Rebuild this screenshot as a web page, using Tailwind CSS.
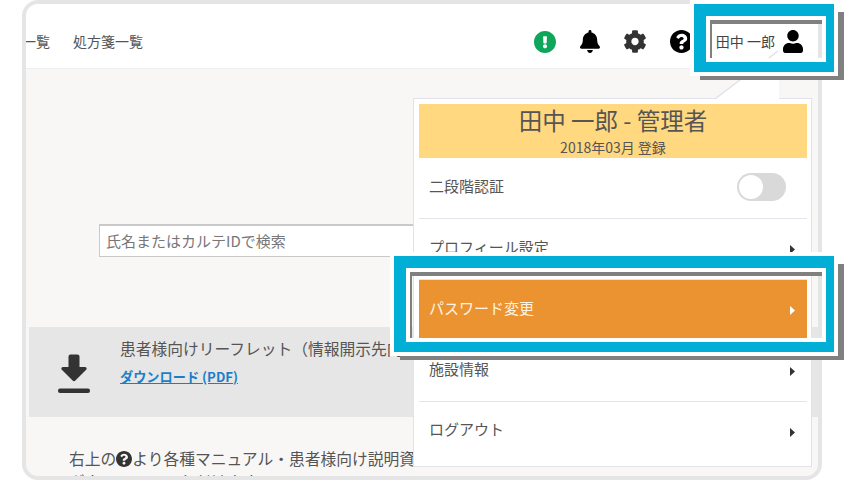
<!DOCTYPE html>
<html lang="ja">
<head>
<meta charset="utf-8">
<script src="https://cdn.jsdelivr.net/npm/@tailwindcss/browser@4"></script>
</head>
<body class="bg-white font-['Noto_Sans_CJK_JP','Noto_Sans',sans-serif] text-[#555]">
<div class="relative w-[844px] h-[480px] overflow-hidden bg-white">

  <!-- device frame -->
  <div class="absolute left-[22px] top-0 w-[800px] h-[480px] border-4 border-[#e5e5e5] rounded-[16px] overflow-hidden bg-[#f8f7f6]">
    <header class="h-[65px] pt-[11px] bg-white border-b border-[#efefef] flex items-center justify-between">
      <nav class="flex items-center gap-[23px] text-[14px] ml-[-4px]">
        <span>一覧</span>
        <span>処方箋一覧</span>
      </nav>
      <div class="flex items-center mr-[15px]">
        <div class="flex items-center gap-[24px] text-black">
          <svg class="w-[22px] h-[22px] ml-[1px]" viewBox="8 8 496 496"><path fill="#0ea65b" d="M504 256c0 136.997-111.043 248-248 248S8 392.997 8 256C8 119.083 119.043 8 256 8s248 111.083 248 248zm-248 50c-25.405 0-46 20.595-46 46s20.595 46 46 46 46-20.595 46-46-20.595-46-46-46zm-43.673-165.346l7.418 136c.347 6.364 5.609 11.346 11.982 11.346h48.546c6.373 0 11.635-4.982 11.982-11.346l7.418-136c.375-6.874-5.098-12.654-11.982-12.654h-63.383c-6.884 0-12.356 5.78-11.981 12.654z"/></svg>
          <svg class="w-[20px] h-[23px]" viewBox="0 0 448 512"><path fill="#000" d="M224 512c35.32 0 63.97-28.65 63.97-63.97H160.03C160.03 483.35 188.68 512 224 512zm215.39-149.71c-19.32-20.76-55.47-51.99-55.47-154.29 0-77.7-54.48-139.9-127.94-155.16V32c0-17.67-14.32-32-31.98-32s-31.98 14.33-31.98 32v20.84C118.56 68.1 64.08 130.3 64.08 208c0 102.3-36.15 133.53-55.47 154.29-6 6.45-8.66 14.16-8.61 21.71.11 16.4 12.98 32 32.1 32h383.8c19.12 0 32-15.6 32.1-32 .05-7.55-2.61-15.27-8.61-21.71z"/></svg>
          <svg class="w-[22px] h-[23px]" viewBox="16 8 480 496"><path fill="#333" d="M487.4 315.7l-42.6-24.6c4.3-23.2 4.3-47 0-70.2l42.6-24.6c4.9-2.8 7.1-8.6 5.5-14-11.1-35.6-30-67.8-54.7-94.6-3.8-4.1-10-5.1-14.8-2.3L380.8 110c-17.9-15.4-38.5-27.3-60.8-35.1V25.8c0-5.6-3.9-10.5-9.4-11.7-36.7-8.2-74.3-7.8-109.2 0-5.5 1.2-9.4 6.1-9.4 11.7V75c-22.2 7.9-42.8 19.8-60.8 35.1L88.7 85.5c-4.9-2.8-11-1.9-14.8 2.3-24.7 26.7-43.6 58.9-54.7 94.6-1.7 5.4.6 11.2 5.5 14L67.3 221c-4.3 23.2-4.3 47 0 70.2l-42.6 24.6c-4.9 2.8-7.1 8.6-5.5 14 11.1 35.6 30 67.8 54.7 94.6 3.8 4.1 10 5.1 14.8 2.3l42.6-24.6c17.9 15.4 38.5 27.3 60.8 35.1v49.2c0 5.6 3.9 10.5 9.4 11.7 36.7 8.2 74.3 7.8 109.2 0 5.5-1.2 9.4-6.1 9.4-11.7v-49.2c22.2-7.9 42.8-19.8 60.8-35.1l42.6 24.6c4.9 2.8 11 1.9 14.8-2.3 24.7-26.7 43.6-58.9 54.7-94.6 1.5-5.5-.7-11.3-5.6-14.1zM256 336c-44.1 0-80-35.9-80-80s35.9-80 80-80 80 35.9 80 80-35.9 80-80 80z"/></svg>
          <svg class="w-[23px] h-[23px]" viewBox="8 8 496 496"><path fill="#000" d="M504 256c0 136.997-111.043 248-248 248S8 392.997 8 256C8 119.083 119.043 8 256 8s248 111.083 248 248zM262.655 90c-54.497 0-89.255 22.957-116.549 63.758-3.536 5.286-2.353 12.415 2.715 16.258l34.699 26.31c5.205 3.947 12.621 3.008 16.665-2.122 17.864-22.658 30.113-35.797 57.303-35.797 20.429 0 45.698 13.148 45.698 32.958 0 14.976-12.363 22.667-32.534 33.976C247.128 238.528 216 254.941 216 296v4c0 6.627 5.373 12 12 12h56c6.627 0 12-5.373 12-12v-1.333c0-28.462 83.186-29.647 83.186-106.667 0-58.002-60.165-102-116.531-102zM256 338c-25.365 0-46 20.635-46 46 0 25.364 20.635 46 46 46s46-20.636 46-46c0-25.365-20.635-46-46-46z"/></svg>
        </div>
        <span class="ml-[23px] text-[14px] text-[#444] whitespace-nowrap">田中 一郎</span>
        <svg class="ml-[8px] w-[20px] h-[23px]" viewBox="0 0 448 512"><path fill="#000" d="M224 256c70.7 0 128-57.3 128-128S294.7 0 224 0 96 57.3 96 128s57.3 128 128 128zm89.6 32h-16.7c-22.2 10.2-46.9 16-72.9 16s-50.6-5.8-72.9-16h-16.7C60.2 288 0 348.2 0 422.4V464c0 26.5 21.5 48 48 48h352c26.5 0 48-21.5 48-48v-41.6c0-74.2-60.2-134.4-134.4-134.4z"/></svg>
      </div>
    </header>

    <main>
      <div class="mt-[155px] ml-[73px] w-[560px] h-[33px] bg-white border border-[#c9c9c9] border-t-2 flex items-center px-[6px] text-[15px] text-[#777]">氏名またはカルテIDで検索</div>

      <section class="mt-[70px] ml-[3px] h-[90px] bg-[#e6e6e6] flex items-start">
        <svg class="ml-[29px] mt-[27px] w-[32px] h-[39px] shrink-0" viewBox="0 0 32 39">
          <path fill="#333" d="M10.5 2.5a2 2 0 0 1 2-2h7a2 2 0 0 1 2 2V13h5.5c1.5 0 2.2 1.7 1.2 2.8L17.4 26.6a2 2 0 0 1-2.8 0L3.8 15.8C2.8 14.7 3.5 13 5 13h5.5z"/>
          <rect x="0" y="34.5" width="32" height="4.5" rx="2" fill="#333"/>
        </svg>
        <div class="ml-[30px]">
          <p class="mt-[10px] text-[15.75px] leading-[24px] text-[#555] whitespace-nowrap">患者様向けリーフレット（情報開示先向け）</p>
          <a class="block mt-[5px] text-[13.2px] leading-[22px] font-bold text-[#1a7fc9] underline whitespace-nowrap">ダウンロード (PDF)</a>
        </div>
      </section>

      <p class="mt-[30px] ml-[43px] w-[700px] text-[15.75px] leading-[23px] text-[#555]">右上の<svg class="inline-block w-[16px] h-[16px] align-[-2px]" viewBox="8 8 496 496"><path fill="#333" d="M504 256c0 136.997-111.043 248-248 248S8 392.997 8 256C8 119.083 119.043 8 256 8s248 111.083 248 248zM262.655 90c-54.497 0-89.255 22.957-116.549 63.758-3.536 5.286-2.353 12.415 2.715 16.258l34.699 26.31c5.205 3.947 12.621 3.008 16.665-2.122 17.864-22.658 30.113-35.797 57.303-35.797 20.429 0 45.698 13.148 45.698 32.958 0 14.976-12.363 22.667-32.534 33.976C247.128 238.528 216 254.941 216 296v4c0 6.627 5.373 12 12 12h56c6.627 0 12-5.373 12-12v-1.333c0-28.462 83.186-29.647 83.186-106.667 0-58.002-60.165-102-116.531-102zM256 338c-25.365 0-46 20.635-46 46 0 25.364 20.635 46 46 46s46-20.636 46-46c0-25.365-20.635-46-46-46z"/></svg>より各種マニュアル・患者様向け説明資料を<br>ダウンロードいただけます。</p>
    </main>

    <!-- account dropdown -->
    <aside class="absolute left-[387px] top-[94px] w-[399px] h-[369px] bg-white border border-[#e2e2ea] pl-[5px] pr-[4px] pt-[5px]">
      <svg class="absolute left-[301px] top-[-49px] w-[64px] h-[50px]" viewBox="0 0 64 50">
        <polygon points="0,49 63,1 64,1 64,50 0,50" fill="#fff"/>
        <line x1="0" y1="49" x2="63" y2="1" stroke="#e2e2ea" stroke-width="1.5"/>
      </svg>
      <div class="relative h-[54px] bg-[#ffd880] flex flex-col items-center">
        <p class="text-[23.5px] leading-[32px] text-[#555] whitespace-nowrap">田中 一郎 - 管理者</p>
        <p class="text-[14px] leading-[22px] text-[#555]">2018年03月 登録</p>
      </div>
      <ul class="text-[15px]">
        <li class="h-[61px] border-b border-[#e4e4ea] flex items-center justify-between pl-[10px] pr-[21px]">
          <span class="pb-[3px]">二段階認証</span>
          <span class="block w-[49px] h-[28px] -mt-[2px] rounded-full bg-[#d9d9d9] p-[2px]"><span class="block w-[24px] h-[24px] rounded-full bg-white"></span></span>
        </li>
        <li class="h-[61px] border-b border-[#e4e4ea] flex items-center justify-between pl-[10px] pr-[12px]">
          <span class="pb-[3px]">プロフィール設定</span>
          <svg class="w-[5px] h-[9px]" viewBox="0 0 5 9"><polygon points="0,0 5,4.5 0,9" fill="#333"/></svg>
        </li>
        <li class="h-[61px] border-b border-[#e4e4ea] bg-[#ea9330] text-[#fff3e0] flex items-center justify-between pl-[10px] pr-[12px]">
          <span class="pb-[3px]">パスワード変更</span>
          <svg class="w-[5px] h-[9px]" viewBox="0 0 5 9"><polygon points="0,0 5,4.5 0,9" fill="#fff"/></svg>
        </li>
        <li class="h-[61px] border-b border-[#e4e4ea] flex items-center justify-between pl-[10px] pr-[12px]">
          <span class="pb-[3px]">施設情報</span>
          <svg class="w-[5px] h-[9px]" viewBox="0 0 5 9"><polygon points="0,0 5,4.5 0,9" fill="#333"/></svg>
        </li>
        <li class="h-[60px] flex items-center justify-between pl-[10px] pr-[12px]">
          <span class="pb-[5px]">ログアウト</span>
          <svg class="w-[5px] h-[9px]" viewBox="0 0 5 9"><polygon points="0,0 5,4.5 0,9" fill="#333"/></svg>
        </li>
      </ul>
    </aside>
  </div>

  <!-- callout 1: user menu -->
  <div class="absolute left-[700px] top-[12px] w-[144px] h-[68px] border-r-[6px] border-b-4 border-[#808080]"></div>
  <div class="absolute left-[690px] top-0 w-[148px] h-[76px] border-4 border-white">
    <div class="w-full h-full border-t-[12px] border-l-[12px] border-r-[8px] border-b-[10px] border-[#01aed6]">
      <div class="w-full h-full border-4 border-white">
        <div class="w-full h-full border-t-4 border-l-2 border-[#808080]"></div>
      </div>
    </div>
  </div>

  <!-- callout 2: password row -->
  <div class="absolute left-[400px] top-[264px] w-[444px] h-[96px] border-r-[6px] border-b-4 border-[#808080]"></div>
  <div class="absolute left-[390px] top-[252px] w-[448px] h-[104px] border-4 border-white">
    <div class="w-full h-full border-t-[12px] border-l-[12px] border-r-[8px] border-b-[10px] border-[#01aed6]">
      <div class="w-full h-full border-4 border-white">
        <div class="w-full h-full border-t-4 border-l-2 border-[#808080]"></div>
      </div>
    </div>
  </div>
</div>
</body>
</html>
